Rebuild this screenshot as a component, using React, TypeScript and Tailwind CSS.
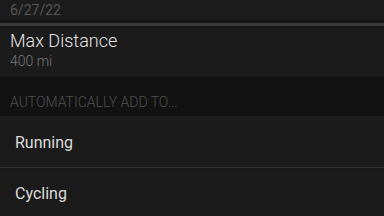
export default function App() {
  return (
    <div className="w-[384px] h-[216px] overflow-hidden bg-[#1b1b1b] flex flex-col" style={{ fontFamily: "Roboto, 'Liberation Sans', sans-serif" }}>
      <div className="h-[20px] bg-[#1c1c1c] px-[10px] pt-[2px] shrink-0">
        <span className="block text-[14px] text-[#555555] leading-[16px]">6/27/22</span>
      </div>
      <div className="h-[3px] bg-[#161616] shrink-0" />
      <div className="h-[3px] bg-[#3a3a3a] shrink-0" />
      <div className="h-[2px] bg-[#151515] shrink-0" />
      <div className="h-[49px] bg-[#1b1b1b] flex flex-col px-[10px] pt-[3px] shrink-0">
        <span className="text-[18px] font-light text-[#e4e4e4] leading-[20px]">Max Distance</span>
        <span className="text-[14px] font-light text-[#787878] leading-[16px] mt-[2px]">400 mi</span>
      </div>
      <div className="h-[39px] bg-[#121212] px-[10px] pt-[17px] shrink-0">
        <span className="block text-[14px] font-light text-[#505050] leading-[16px]">AUTOMATICALLY ADD TO...</span>
      </div>
      <div className="h-[4px] bg-[#1e1e1e] shrink-0" />
      <div className="h-[47px] px-[15px] pt-[14px] shrink-0">
        <span className="block text-[16px] text-[#dcdcdc] leading-[18px]">Running</span>
      </div>
      <div className="h-[1px] bg-[#343434] shrink-0" />
      <div className="h-[1px] bg-[#151515] shrink-0" />
      <div className="flex-1 px-[15px] pt-[16px]">
        <span className="block text-[16px] text-[#dcdcdc] leading-[18px]">Cycling</span>
      </div>
    </div>
  );
}
